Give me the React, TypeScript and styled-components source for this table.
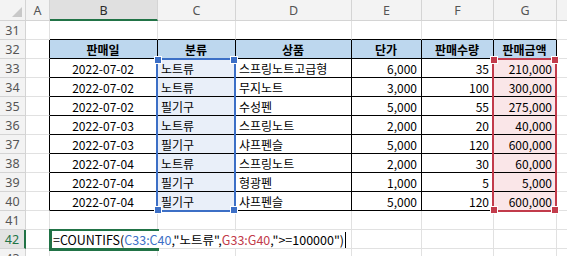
import { Fragment } from 'react';
import type { FC } from 'react';
import styled, { createGlobalStyle } from 'styled-components';

const GlobalStyle = createGlobalStyle`
  html, body {
    margin: 0;
    padding: 0;
    background: #fff;
    overflow: hidden;
  }
  body {
    font-family: 'Noto Sans CJK KR', 'Noto Sans', sans-serif;
  }
`;

const GRID = '#e1e1e1';
const HEAD_BG = '#f3f3f3';
const HEAD_LINE = '#d4d4d4';
const GREEN = '#217346';
const BLUE = '#3c6fc6';
const RED = '#c23b4b';

const COLS = ['A', 'B', 'C', 'D', 'E', 'F', 'G', 'H'];
const COL_WIDTHS = [24, 108, 78, 116, 70, 72, 63, 72];
const ROW_HEAD_W = 26;
const COL_HEAD_H = 21;
const ROW_H = 19;
const FIRST_ROW = 31;
const ROWS = Array.from({ length: 13 }, (_, i) => FIRST_ROW + i);

type Align = 'left' | 'center' | 'right';

const HEADERS = ['판매일', '분류', '상품', '단가', '판매수량', '판매금액'];
const DATA: string[][] = [
  ['2022-07-02', '노트류', '스프링노트고급형', '6,000', '35', '210,000'],
  ['2022-07-02', '노트류', '무지노트', '3,000', '100', '300,000'],
  ['2022-07-02', '필기구', '수성펜', '5,000', '55', '275,000'],
  ['2022-07-03', '노트류', '스프링노트', '2,000', '20', '40,000'],
  ['2022-07-03', '필기구', '샤프펜슬', '5,000', '120', '600,000'],
  ['2022-07-04', '노트류', '스프링노트', '2,000', '30', '60,000'],
  ['2022-07-04', '필기구', '형광펜', '1,000', '5', '5,000'],
  ['2022-07-04', '필기구', '샤프펜슬', '5,000', '120', '600,000'],
];
const ALIGNS: Align[] = ['center', 'left', 'left', 'right', 'right', 'right'];

// x offset of a column's left edge (col index into COLS)
const colX = (c: number) => ROW_HEAD_W + COL_WIDTHS.slice(0, c).reduce((a, b) => a + b, 0);
const rowY = (r: number) => COL_HEAD_H + (r - FIRST_ROW) * ROW_H;

const Sheet = styled.div`
  position: relative;
  display: grid;
  grid-template-columns: ${ROW_HEAD_W}px ${COL_WIDTHS.map(w => `${w}px`).join(' ')};
  grid-template-rows: ${COL_HEAD_H}px repeat(${ROWS.length}, ${ROW_H}px);
  width: 567px;
  height: 256px;
  overflow: hidden;
  font-size: 12px;
  color: #000;
`;

const Corner = styled.div`
  position: relative;
  background: ${HEAD_BG};
  border-right: 1px solid ${HEAD_LINE};
  border-bottom: 1px solid ${HEAD_LINE};
  box-sizing: border-box;

  &::after {
    content: '';
    position: absolute;
    right: 3px;
    bottom: 3px;
    border-style: solid;
    border-width: 0 0 10px 10px;
    border-color: transparent transparent #c8c8c8 transparent;
  }
`;

const ColHead = styled.div<{ $active?: boolean }>`
  display: flex;
  align-items: center;
  justify-content: center;
  box-sizing: border-box;
  background: ${p => (p.$active ? '#e0e0e0' : HEAD_BG)};
  border-right: 1px solid ${HEAD_LINE};
  border-bottom: ${p => (p.$active ? `2px solid ${GREEN}` : `1px solid ${HEAD_LINE}`)};
  padding-top: ${p => (p.$active ? '1px' : '0')};
  font-family: 'Noto Sans', 'Liberation Sans', sans-serif;
  font-size: 12.5px;
  color: ${p => (p.$active ? '#2b2b2b' : '#555')};
`;

const RowHead = styled.div<{ $active?: boolean }>`
  display: flex;
  align-items: center;
  justify-content: center;
  box-sizing: border-box;
  background: ${p => (p.$active ? '#e3e3e3' : HEAD_BG)};
  border-right: ${p => (p.$active ? `2px solid ${GREEN}` : `1px solid ${HEAD_LINE}`)};
  border-bottom: 1px solid ${HEAD_LINE};
  font-family: 'Noto Sans', 'Liberation Sans', sans-serif;
  font-size: 12.5px;
  color: ${p => (p.$active ? GREEN : '#555')};
`;

const Cell = styled.div<{ $align: Align; $bold?: boolean; $fill?: string; $right: string; $bottom: string }>`
  display: flex;
  align-items: center;
  justify-content: ${p => (p.$align === 'left' ? 'flex-start' : p.$align === 'right' ? 'flex-end' : 'center')};
  box-sizing: border-box;
  padding: 0 4px 0 3px;
  background: ${p => p.$fill ?? '#fff'};
  border-right: 1px solid ${p => p.$right};
  border-bottom: 1px solid ${p => p.$bottom};
  font-weight: ${p => (p.$bold ? 700 : 400)};
  white-space: nowrap;
  overflow: hidden;
`;

const RangeBox = styled.div<{ $color: string; $x: number; $y: number; $w: number; $h: number }>`
  position: absolute;
  left: ${p => p.$x}px;
  top: ${p => p.$y}px;
  width: ${p => p.$w}px;
  height: ${p => p.$h}px;
  box-sizing: border-box;
  border: 2px solid ${p => p.$color};
  pointer-events: none;
`;

const Handle = styled.span<{ $color: string; $v: 'top' | 'bottom'; $h: 'left' | 'right' }>`
  position: absolute;
  ${p => p.$v}: -4px;
  ${p => p.$h}: -4px;
  width: 6px;
  height: 6px;
  background: ${p => p.$color};
  border: 1px solid #fff;
`;

const ActiveCell = styled.div<{ $x: number; $y: number; $w: number; $h: number }>`
  position: absolute;
  left: ${p => p.$x}px;
  top: ${p => p.$y}px;
  width: ${p => p.$w}px;
  height: ${p => p.$h}px;
  box-sizing: border-box;
  border: 3px solid ${GREEN};
`;

const Editor = styled.div<{ $x: number; $y: number }>`
  position: absolute;
  left: ${p => p.$x}px;
  top: ${p => p.$y}px;
  height: 17px;
  display: flex;
  align-items: center;
  padding: 0 2px 0 1px;
  background: #fff;
  white-space: nowrap;
  font-size: 12.5px;
`;

const Ref = styled.span<{ $color: string }>`
  color: ${p => p.$color};
`;

const Caret = styled.span`
  display: inline-block;
  width: 1px;
  height: 16px;
  margin-left: 1px;
  background: #000;
`;

const inTable = (r: number, c: number) => r >= 32 && r <= 40 && c >= 1 && c <= 6;

const cellProps = (r: number, c: number) => {
  const right = inTable(r, c) || (c === 0 && r >= 32 && r <= 40) ? '#000' : GRID;
  const bottom = inTable(r, c) || (r === 31 && c >= 1 && c <= 6) ? '#000' : GRID;
  let text = '';
  let align: Align = 'left';
  let bold = false;
  let fill: string | undefined;
  if (inTable(r, c)) {
    align = ALIGNS[c - 1];
    if (r === 32) {
      text = HEADERS[c - 1];
      align = 'center';
      bold = true;
      fill = '#bdd7ee';
    } else {
      text = DATA[r - 33][c - 1];
      if (c === 2) fill = '#e9eff9';
      if (c === 6) fill = '#fae6e8';
    }
  }
  return { right, bottom, text, align, bold, fill };
};

const App: FC = () => {
  const cx = colX(2);
  const gx = colX(6);
  const top = rowY(33) - 1;
  const height = rowY(41) - rowY(33) + 2;

  return (
    <>
      <GlobalStyle />
      <Sheet>
        <Corner />
        {COLS.map(col => (
          <ColHead key={col} $active={col === 'B'}>
            {col}
          </ColHead>
        ))}
        {ROWS.map(r => (
          <Fragment key={r}>
            <RowHead $active={r === 42}>{r}</RowHead>
            {COLS.map((col, c) => {
              const p = cellProps(r, c);
              return (
                <Cell key={col} $align={p.align} $bold={p.bold} $fill={p.fill} $right={p.right} $bottom={p.bottom}>
                  {p.text}
                </Cell>
              );
            })}
          </Fragment>
        ))}

        <RangeBox $color={BLUE} $x={cx - 2} $y={top} $w={COL_WIDTHS[2] + 2} $h={height}>
          <Handle $color={BLUE} $v="top" $h="left" />
          <Handle $color={BLUE} $v="top" $h="right" />
          <Handle $color={BLUE} $v="bottom" $h="left" />
          <Handle $color={BLUE} $v="bottom" $h="right" />
        </RangeBox>
        <RangeBox $color={RED} $x={gx - 2} $y={top} $w={COL_WIDTHS[6] + 2} $h={height}>
          <Handle $color={RED} $v="top" $h="left" />
          <Handle $color={RED} $v="top" $h="right" />
          <Handle $color={RED} $v="bottom" $h="left" />
          <Handle $color={RED} $v="bottom" $h="right" />
        </RangeBox>

        <ActiveCell $x={colX(1) - 1} $y={rowY(42) - 1} $w={COL_WIDTHS[1] + 2} $h={ROW_H + 3} />
        <Editor $x={colX(1) + 2} $y={rowY(42) + 1}>
          =COUNTIFS(<Ref $color={BLUE}>C33:C40</Ref>,"노트류",<Ref $color={RED}>G33:G40</Ref>,"&gt;=100000")
          <Caret />
        </Editor>
      </Sheet>
    </>
  );
};

export default App;
